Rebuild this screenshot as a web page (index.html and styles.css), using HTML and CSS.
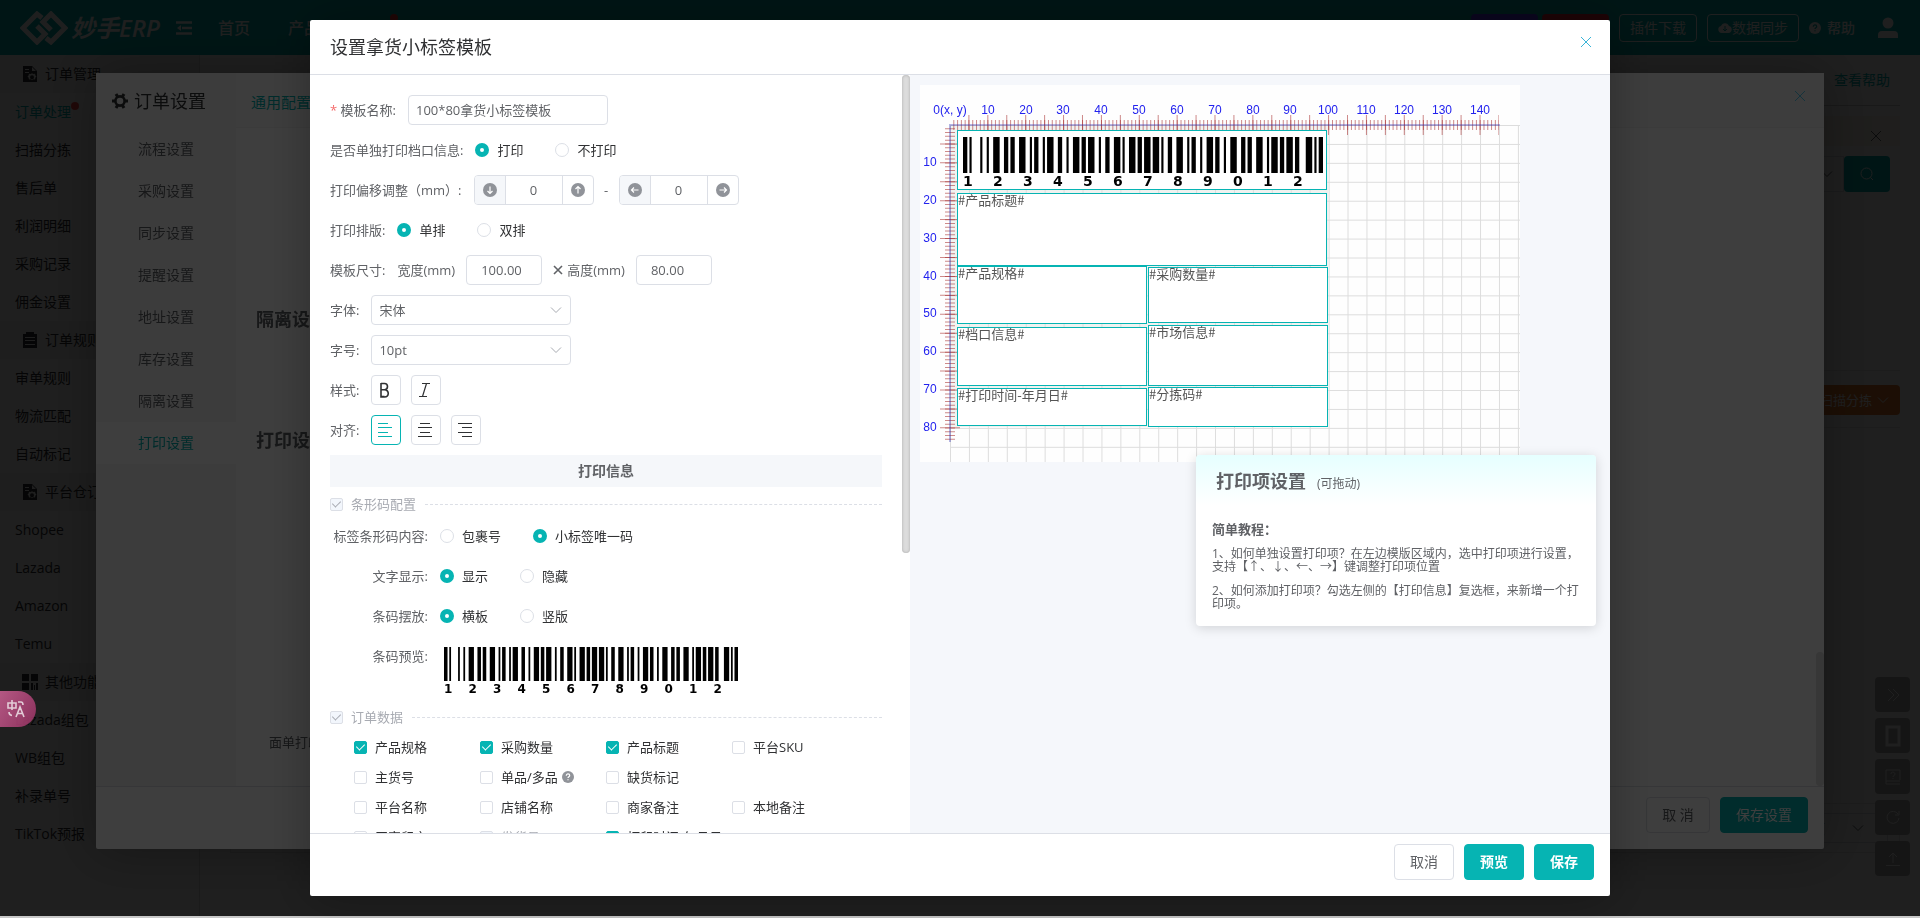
FILE: index.html
```html
<!DOCTYPE html>
<html lang="zh-CN">
<head>
<meta charset="utf-8">
<title>妙手ERP</title>
<link rel="stylesheet" href="styles.css">
</head>
<body>
<svg class="defs" aria-hidden="true">
  <symbol id="i-doc" viewBox="0 0 16 16"><path fill="currentColor" fill-rule="evenodd" d="M1 0h9l5 5v11H1zM3 3v1h4V3zM3 6v1h4V6zM10 1v4h4zM10 7l1 1 2-.3.5 1.800 1 1-1 1-.5 2-2-.3-1 1-1-1-2 .3-.5-2-1-1 1-1 .5-1.800 2 .3zm0 2.200a2 2 0 100 4 2 2 0 000-4z"/></symbol>
  <symbol id="i-clip" viewBox="0 0 16 16"><path fill="currentColor" fill-rule="evenodd" d="M4 0h8v2h3v14H1V2h3zM3 5v1h10V5zM3 8v1h10V8zM3 12v1h10v-1z"/></symbol>
  <symbol id="i-grid" viewBox="0 0 16 16"><path fill="currentColor" d="M0 0h7v7H0zM9 0h7v7H9zM0 9h7v7H0zM9 9h2v7H9zM12 11h1v5h-1zM14 9h2v7h-2z"/></symbol>
  <symbol id="i-gear" viewBox="0 0 16 16"><circle cx="8" cy="8" r="4.600" fill="none" stroke="currentColor" stroke-width="2.600"/><path stroke="currentColor" stroke-width="3" d="M0 8h3M13 8h3M4 1l1.500 2.600M12 1l-1.500 2.600M4 15l1.500-2.600M12 15l-1.500-2.600"/></symbol>
  <symbol id="i-x" viewBox="0 0 12 12"><path fill="none" stroke="currentColor" d="M1 1l10 10M11 1L1 11"/></symbol>
  <symbol id="i-down" viewBox="0 0 12 12"><path fill="none" stroke="currentColor" d="M1 3.500l5 5 5-5"/></symbol>
  <symbol id="i-arrow" viewBox="0 0 14 14"><circle cx="7" cy="7" r="7" fill="#909399"/><path fill="none" stroke="#fff" stroke-width="1.200" d="M7 3.500v7M4.500 8L7 10.500 9.500 8"/></symbol>
  <symbol id="i-help" viewBox="0 0 14 14"><circle cx="7" cy="7" r="7" fill="currentColor"/><path class="help-mark" fill="none" stroke-width="1.400" d="M5 5.600c0-3 4-2.600 4-.3 0 1.500-2 1.500-2 3M7 9.500v1.400"/></symbol>
  <symbol id="bars" viewBox="0 0 167 10" preserveAspectRatio="none"><path stroke="#000" stroke-width="10" d="M0 5H167" stroke-dasharray="2 1 1 4 1 2 1 2 3 2 2 1 2 2 3 2 1 1 2 2 1 1 3 2 2 2 1 2 3 1 2 1 3 2 1 2 2 2 3 1 1 2 3 1 2 1 3 1 3 1 1 2 2 2 3 2 1 1 2 2 1 2 3 1 2 2 1 2 3 2 2 1 2 2 3 2 1 1 3 1 2 1 3 1 2 3 3 1 1 1 2"/></symbol>
</svg>

<div class="app">
  <header class="top">
    <div class="logo">
      <svg width="48" height="34" viewBox="0 0 48 34" fill="none" stroke="#fff" stroke-width="5"><path d="M22 7l-5-4L3 17l14 14 8-8-8-8"/><path d="M26 27l5 4 14-14L31 3l-8 8 8 8"/></svg>
      <span>妙手ERP</span>
    </div>
    <svg class="fold" width="16" height="14" viewBox="0 0 16 14" fill="none" stroke="#fff" stroke-width="2.600"><path d="M0 1.500h16M6 7h10M0 12.500h16"/><path fill="#fff" stroke="none" d="M5 4v6L1 7z"/></svg>
    <nav class="nav"><a href="#">首页</a><a href="#">产品</a><i class="nav-dot"></i></nav>
    <div class="tags"><i class="tag purple"></i><i class="tag red"></i></div>
    <button class="ghost">插件下载</button>
    <button class="ghost"><svg width="14" height="12" viewBox="0 0 14 12"><path fill="#fff" d="M3.500 11a3.500 3.500 0 01-.5-6.900 4.200 4.200 0 018 0A3.500 3.500 0 0110.500 11z"/><path stroke="#00b2b0" d="M7 4v5M5 7l2 2 2-2" fill="none"/></svg>数据同步</button>
    <a class="help" href="#"><svg width="12" height="12"><use href="#i-help"/></svg>帮助</a>
    <svg class="user" width="20" height="22" viewBox="0 0 20 22" fill="#fff"><circle cx="10" cy="6" r="5.500"/><path d="M0 21v-3a4 4 0 014-4h12a4 4 0 014 4v3z"/></svg>
  </header>
  <div class="below">
    <nav class="side">
      <div class="group"><svg width="16" height="16"><use href="#i-doc"/></svg>订单管理</div>
      <a class="on" href="#">订单处理<i></i></a><a href="#">扫描分拣</a><a href="#">售后单</a><a href="#">利润明细</a><a href="#">采购记录</a><a href="#">佣金设置</a>
      <div class="group"><svg width="16" height="16"><use href="#i-clip"/></svg>订单规则</div>
      <a href="#">审单规则</a><a href="#">物流匹配</a><a href="#">自动标记</a>
      <div class="group"><svg width="16" height="16"><use href="#i-doc"/></svg>平台仓订单</div>
      <a href="#">Shopee</a><a href="#">Lazada</a><a href="#">Amazon</a><a href="#">Temu</a>
      <div class="group"><svg width="16" height="16"><use href="#i-grid"/></svg>其他功能</div>
      <a href="#">Lazada组包</a><a href="#">WB组包</a><a href="#">补录单号</a><a href="#">TikTok预报</a>
    </nav>
    <main class="main">
      <div class="page-head"><h1>订单处理</h1><a href="#">查看帮助</a></div>
      <div class="notice"><svg width="12" height="12"><use href="#i-x"/></svg></div>
      <div class="filter"><div class="filter-box"><svg width="12" height="12"><use href="#i-down"/></svg></div><button aria-label="搜索"><svg width="14" height="14" viewBox="0 0 14 14" fill="none" stroke="#fff"><circle cx="6.500" cy="6.500" r="5.500"/><path d="M10.500 10.500L13 13"/></svg></button></div>
      <div class="tools"><button>扫描分拣<svg width="12" height="12"><use href="#i-down"/></svg></button></div>
      <div class="pager"><div class="per">20条/页<svg width="12" height="12"><use href="#i-down"/></svg></div></div>
    </main>
  </div>
  <div class="rail">
    <button aria-label="收起"><svg width="14" height="14" viewBox="0 0 14 14"><path d="M2 1l6 6-6 6M7 1l6 6-6 6"/></svg></button>
    <button aria-label="手机"><svg width="16" height="22" viewBox="0 0 16 22"><rect x="2" y="2" width="12" height="18" stroke-width="3"/></svg></button>
    <button aria-label="教程"><svg width="16" height="16" viewBox="0 0 16 16"><path d="M15 11V1H1v14h14M1 12h14M6 5c0-3 4-2 4 0s-2 1-2 3M8 9v1"/></svg></button>
    <button aria-label="刷新"><svg width="14" height="14" viewBox="0 0 14 14"><path d="M12 3a6 6 0 101 4M13 0v4H9"/></svg></button>
    <button aria-label="顶部"><svg width="14" height="14" viewBox="0 0 14 14"><path d="M7 11V1M3 5l4-4 4 4M0 13.500h14"/></svg></button>
  </div>
</div>

<div class="shade first">
  <section class="dialog">
    <div class="dialog-main">
      <div class="dialog-menu">
        <h2><svg width="16" height="16"><use href="#i-gear"/></svg>订单设置</h2>
        <a href="#">流程设置</a><a href="#">采购设置</a><a href="#">同步设置</a><a href="#">提醒设置</a><a href="#">地址设置</a><a href="#">库存设置</a><a href="#">隔离设置</a><a class="on" href="#">打印设置</a>
      </div>
      <div class="dialog-body">
        <div class="tab"><a href="#">通用配置</a><button aria-label="关闭"><svg width="12" height="12"><use href="#i-x"/></svg></button></div>
        <h3 class="isolate">隔离设置</h3>
        <h3 class="print">打印设置</h3>
        <p>面单打印模板</p>
        <i class="bar"></i>
      </div>
    </div>
    <div class="dialog-foot"><button class="btn">取 消</button><button class="btn primary thin">保存设置</button></div>
  </section>
</div>

<div class="shade second">
  <section class="modal" role="dialog" aria-label="设置拿货小标签模板">
    <header class="modal-head"><h2>设置拿货小标签模板</h2><button aria-label="关闭"><svg width="12" height="12"><use href="#i-x"/></svg></button></header>
    <div class="modal-body">
      <form class="form">
        <div class="row"><label class="lb" for="name"><b>*</b> 模板名称:</label><input class="text name" id="name" value="100*80拿货小标签模板"></div>
        <div class="row"><span class="lb">是否单独打印档口信息:</span><label class="opt"><input type="radio" name="stall" checked>打印</label><label class="opt"><input type="radio" name="stall">不打印</label></div>
        <div class="row"><span class="lb wide">打印偏移调整（mm）:</span>
          <div class="step"><button type="button" class="dim" aria-label="下移"><svg width="14" height="14"><use href="#i-arrow"/></svg></button><input value="0" aria-label="纵向偏移"><button type="button" aria-label="上移"><svg class="r180" width="14" height="14"><use href="#i-arrow"/></svg></button></div>
          <span class="dash">-</span>
          <div class="step"><button type="button" class="dim" aria-label="左移"><svg class="r90" width="14" height="14"><use href="#i-arrow"/></svg></button><input value="0" aria-label="横向偏移"><button type="button" aria-label="右移"><svg class="r270" width="14" height="14"><use href="#i-arrow"/></svg></button></div>
        </div>
        <div class="row"><span class="lb">打印排版:</span><label class="opt"><input type="radio" name="lay" checked>单排</label><label class="opt"><input type="radio" name="lay">双排</label></div>
        <div class="row"><span class="lb">模板尺寸:</span><label class="size" for="w">宽度(mm)</label><input class="text num" id="w" value="100.00"><svg class="times" width="10" height="10" viewBox="0 0 10 10"><path stroke="#606266" stroke-width="1.600" d="M1 1l8 8M9 1L1 9"/></svg><label class="size" for="h">高度(mm)</label><input class="text num" id="h" value="80.00"></div>
        <div class="row"><label class="lb" for="font">字体:</label><span class="pick"><select id="font"><option>宋体</option></select><svg width="12" height="12"><use href="#i-down"/></svg></span></div>
        <div class="row"><label class="lb" for="pt">字号:</label><span class="pick"><select id="pt"><option>10pt</option></select><svg width="12" height="12"><use href="#i-down"/></svg></span></div>
        <div class="row"><span class="lb">样式:</span><div class="tools-row">
          <button type="button" aria-label="加粗"><svg width="16" height="16" viewBox="0 0 16 16"><path stroke-width="1.600" d="M4 1v14h3.500c5 0 5-7.300 0-7.300H4M4 1.500h3.500c4 0 4 6.200 0 6.200M4 14.500h3.500"/></svg></button>
          <button type="button" aria-label="斜体"><svg width="16" height="16" viewBox="0 0 16 16"><path stroke-width="1.200" d="M5 1.500h8M2 14.500h8M9.500 1.500l-4 13"/></svg></button></div></div>
        <div class="row"><span class="lb">对齐:</span><div class="tools-row">
          <button type="button" class="on" aria-label="左对齐"><svg width="16" height="16" viewBox="0 0 16 16"><path d="M1 1.500h10M1 5.500h14M1 10.500h10M1 14.500h14"/></svg></button>
          <button type="button" aria-label="居中"><svg width="16" height="16" viewBox="0 0 16 16"><path d="M3 1.500h10M1 5.500h14M3 10.500h10M1 14.500h14"/></svg></button>
          <button type="button" aria-label="右对齐"><svg width="16" height="16" viewBox="0 0 16 16"><path d="M1 1.500h14M5 5.500h10M1 10.500h14M5 14.500h10"/></svg></button></div></div>
        <h3 class="band">打印信息</h3>
        <div class="divide"><label class="opt off"><input type="checkbox" checked disabled>条形码配置</label></div>
        <div class="row in"><span class="lb">标签条形码内容:</span><label class="opt"><input type="radio" name="code">包裹号</label><label class="opt"><input type="radio" name="code" checked>小标签唯一码</label></div>
        <div class="row in"><span class="lb">文字显示:</span><label class="opt"><input type="radio" name="txt" checked>显示</label><label class="opt"><input type="radio" name="txt">隐藏</label></div>
        <div class="row in"><span class="lb">条码摆放:</span><label class="opt"><input type="radio" name="dir" checked>横板</label><label class="opt"><input type="radio" name="dir">竖版</label></div>
        <div class="row in preview"><span class="lb">条码预览:</span>
          <div class="code"><svg><use href="#bars"/></svg><div class="digits"><span>1</span><span>2</span><span>3</span><span>4</span><span>5</span><span>6</span><span>7</span><span>8</span><span>9</span><span>0</span><span>1</span><span>2</span></div></div></div>
        <div class="divide"><label class="opt off"><input type="checkbox" checked disabled>订单数据</label></div>
        <div class="checks">
          <label class="opt"><input type="checkbox" checked>产品规格</label><label class="opt"><input type="checkbox" checked>采购数量</label><label class="opt"><input type="checkbox" checked>产品标题</label><label class="opt"><input type="checkbox">平台SKU</label>
          <label class="opt"><input type="checkbox">主货号</label><label class="opt"><input type="checkbox">单品/多品<svg class="tip" width="12" height="12"><use href="#i-help"/></svg></label><label class="opt"><input type="checkbox">缺货标记</label><span></span>
          <label class="opt"><input type="checkbox">平台名称</label><label class="opt"><input type="checkbox">店铺名称</label><label class="opt"><input type="checkbox">商家备注</label><label class="opt"><input type="checkbox">本地备注</label>
          <label class="opt"><input type="checkbox">买家留言</label><label class="opt off"><input type="checkbox" disabled>发货员</label><label class="opt"><input type="checkbox" checked>打印时间-年月日</label>
        </div>
      </form>
      <div class="track"><i></i></div>
      <div class="stage">
        <div class="canvas">
          <svg class="ruler" width="600" height="377" viewBox="0 0 600 377">
            <defs>
              <pattern id="g" x="30" y="40" width="18.930" height="18.930" patternUnits="userSpaceOnUse"><path d="M0 .5H19M.5 0V19" stroke="#ddd" fill="none"/></pattern>
            </defs>
            <rect x="30" y="40" width="378" height="302" fill="#f0f2f0"/>
            <rect x="30" y="40" width="570" height="337" fill="url(#g)"/>
            <g stroke="#a52a2a" stroke-opacity=".55" fill="none">
              <path d="M33.300 40H579" stroke-width="10" stroke-dasharray="1 2.787"/>
              <path d="M48.400 40H579" stroke-width="20" stroke-dasharray="1 17.930"/>
              <path d="M30 43.300V355" stroke-width="10" stroke-dasharray="1 2.787"/>
              <path d="M30 58.400V352" stroke-width="20" stroke-dasharray="1 17.930"/>
            </g>
            <path d="M29 40H580M30 40V357" stroke="#2a2ab0" stroke-opacity=".35" stroke-width="2"/>
            <g class="nums">
              <text x="30" y="29">0(x, y)</text><text x="68" y="29">10</text><text x="106" y="29">20</text><text x="143" y="29">30</text><text x="181" y="29">40</text><text x="219" y="29">50</text><text x="257" y="29">60</text><text x="295" y="29">70</text><text x="333" y="29">80</text><text x="370" y="29">90</text><text x="408" y="29">100</text><text x="446" y="29">110</text><text x="484" y="29">120</text><text x="522" y="29">130</text><text x="560" y="29">140</text>
              <text x="10" y="81">10</text><text x="10" y="119">20</text><text x="10" y="157">30</text><text x="10" y="195">40</text><text x="10" y="232">50</text><text x="10" y="270">60</text><text x="10" y="308">70</text><text x="10" y="346">80</text>
            </g>
          </svg>
          <div class="item barcode"><div class="code"><svg><use href="#bars"/></svg><div class="digits"><span>1</span><span>2</span><span>3</span><span>4</span><span>5</span><span>6</span><span>7</span><span>8</span><span>9</span><span>0</span><span>1</span><span>2</span></div></div></div>
          <div class="item title">#产品标题#</div>
          <div class="item spec">#产品规格#</div>
          <div class="item qty">#采购数量#</div>
          <div class="item stall">#档口信息#</div>
          <div class="item market">#市场信息#</div>
          <div class="item date">#打印时间-年月日#</div>
          <div class="item sort">#分拣码#</div>
        </div>
        <aside class="float">
          <h3>打印项设置<small>(可拖动)</small></h3>
          <div class="float-body">
            <h4>简单教程：</h4>
            <p>1、如何单独设置打印项？在左边模版区域内，选中打印项进行设置，支持【↑、↓、←、→】键调整打印项位置</p>
            <p>2、如何添加打印项？勾选左侧的【打印信息】复选框，来新增一个打印项。</p>
          </div>
        </aside>
      </div>
    </div>
    <footer class="modal-foot"><button class="btn">取消</button><button class="btn primary">预览</button><button class="btn primary">保存</button></footer>
  </section>
</div>

<button class="translate" aria-label="翻译"><svg width="18" height="18" viewBox="0 0 18 18" fill="none" stroke="#e3cdd8" stroke-width="1.600"><path d="M1 3h8v5H1zM5 0v10M11 2h3q2 0 2 3M2 12q0 3 3 3.500M9 17l4-10 4 10M10.500 13.500h5"/></svg></button>
</body>
</html>
```

FILE: styles.css
```css
* { box-sizing: border-box; }
body {
  margin: 0;
  height: 100vh;
  overflow: hidden;
  background: #c8c8c8;
  font: 13px/20px "Open Sans", "Noto Sans CJK SC", sans-serif;
  color: #606266;
}
button, input, select { font: inherit; color: inherit; }
button { padding: 0; border: 0; background: none; display: flex; align-items: center; justify-content: center; }
a { color: inherit; text-decoration: none; }
h1, h2, h3, h4, p { margin: 0; font-weight: 400; }
svg { flex: none; }
.defs { position: absolute; width: 0; height: 0; }

/* application page */
.app { height: calc(100vh - 2px); background: #fff; display: flex; flex-direction: column; overflow: hidden; }
.top { flex: none; height: 55px; background: #00b2b0; color: #fff; display: flex; align-items: center; padding: 0 22px 0 20px; font-size: 14px; }
.logo { display: flex; align-items: center; gap: 3px; font-size: 24px; font-style: italic; font-weight: 600; }
.fold { margin-left: 16px; }
.nav { display: flex; margin-left: 26px; gap: 38px; font-size: 16px; font-weight: 500; flex: 1; }
.nav-dot { width: 8px; height: 8px; border-radius: 4px; background: #f33; margin: -4px 0 0 32px; }
.tags { display: flex; gap: 4px; margin-right: 10px; }
.tag { width: 67px; height: 28px; border-radius: 4px; background: #53f; }
.tag.red { background: #e23; }
.ghost { height: 28px; padding: 0 10px; border: 1px solid #fff; border-radius: 4px; margin-right: 10px; }
.help-mark { stroke: var(--mark, #fff); }
.help { --mark: #00b2b0; display: flex; align-items: center; gap: 6px; font-weight: 500; margin-right: 23px; }
.below { flex: 1; display: flex; min-height: 0; }
.side { flex: none; width: 200px; border-right: 1px solid #ddd; font-size: 14px; color: #303133; }
.side a, .group { display: flex; align-items: center; height: 38px; padding-left: 15px; }
.side a.on { color: #00b2b0; }
.side a i { width: 8px; height: 8px; border-radius: 4px; background: #f44; margin-top: -12px; }
.side .group { padding-left: 22px; gap: 7px; background: #f4f4f4; }
.main { flex: 1; display: flex; flex-direction: column; padding: 0 20px 63px 30px; }
.page-head { display: flex; justify-content: space-between; align-items: center; height: 51px; padding-right: 10px; border-bottom: 1px solid #ccc; }
.page-head h1 { font-size: 20px; line-height: 28px; margin-top: 8px; color: #303133; }
.page-head a { font-size: 14px; color: #00b2b0; }
.notice { height: 30px; margin-top: 10px; background: #fdf6ec; display: flex; justify-content: flex-end; align-items: flex-end; padding: 4px 18px; }
.filter { display: flex; height: 36px; margin: 10px 10px 0 0; }
.filter-box { flex: 1; border: 1px solid #dcdfe6; display: flex; align-items: center; justify-content: flex-end; padding-right: 10px; }
.filter button { width: 46px; border-radius: 4px; background: #00b2b0; }
.tools { margin-top: 178px; padding: 14px 0 12px; border: solid #e8e8e8; border-width: 1px 0; display: flex; justify-content: flex-end; }
.tools button { height: 30px; padding: 0 11px; gap: 5px; border-radius: 4px; background: #e6792b; color: #fff; }
.pager { margin-top: auto; height: 50px; border: 1px solid #e8e8e8; display: flex; justify-content: flex-end; align-items: center; padding-right: 11px; }
.per { display: flex; align-items: center; justify-content: flex-end; gap: 27px; width: 120px; height: 30px; padding-right: 23px; border: 1px solid #dcdfe6; }
.rail { position: absolute; right: 10px; bottom: 42px; display: grid; gap: 6px; }
.rail button { width: 35px; height: 35px; border-radius: 4px; background: #b0b0b0; }
.rail svg { fill: none; stroke: #fff; stroke-width: 1; }

/* overlays */
.shade { position: fixed; inset: 0 0 2px; display: flex; justify-content: center; align-items: flex-start; }
.first { background: rgba(0, 0, 0, .5); padding-top: 73px; }
.second { background: rgba(0, 0, 0, .755); padding-top: 20px; }
.btn { height: 36px; min-width: 60px; padding: 0 15px; border: 1px solid #dcdfe6; border-radius: 4px; background: #fff; font-size: 14px; }
.btn.primary { border-color: #06b4b3; background: #06b4b3; color: #fff; font-weight: 700; }
.btn.thin { font-weight: 400; }

/* order settings dialog */
.dialog { width: 90%; height: calc(100vh - 142px); background: #fff; border-radius: 2px; box-shadow: 1px 1px 50px rgba(0, 0, 0, .3); display: flex; flex-direction: column; }
.dialog-main { flex: 1; display: flex; min-height: 0; border-bottom: 1px solid #dcdfe6; }
.dialog-menu { width: 140px; background: #f6f6f6; font-size: 14px; }
.dialog-menu h2 { display: flex; align-items: center; gap: 6px; height: 55px; padding-left: 16px; font-size: 18px; color: #303133; }
.dialog-menu a { display: block; line-height: 42px; text-align: center; }
.dialog-menu a.on { background: #fff; color: #00b2b0; }
.dialog-body { flex: 1; position: relative; }
.tab { display: flex; justify-content: space-between; align-items: center; height: 55px; padding: 4px 18px 0 15px; background: #fafafa; border-bottom: 1px solid #f0f0f0; font-size: 15px; color: #00b2b0; }
.tab button { color: #5cd0f4; margin-top: -12px; }
.dialog-body h3 { font-size: 18px; line-height: 24px; font-weight: 700; padding-left: 20px; }
.isolate { margin-top: 179px; }
.print { margin-top: 97px; }
.dialog-body p { padding-left: 33px; margin-top: 280px; }
.bar { position: absolute; right: 0; bottom: 0; width: 8px; height: 134px; border-radius: 4px; background: #e0e0e0; }
.dialog-foot { display: flex; justify-content: flex-end; gap: 10px; padding: 10px 16px 16px; }
.dialog-foot .btn { min-width: 64px; }

/* label template modal */
.modal { width: min(1300px, 96vw); height: calc(100vh - 42px); background: #fff; border-radius: 2px; box-shadow: 1px 1px 50px rgba(0, 0, 0, .3); display: flex; flex-direction: column; }
.modal-head { flex: none; height: 55px; padding: 0 18px 0 20px; display: flex; align-items: center; justify-content: space-between; border-bottom: 1px solid #dcdfe6; }
.modal-head h2 { font-size: 18px; color: #303133; }
.modal-head button { color: #3ab4d8; margin-top: -10px; }
.modal-body { flex: 1; min-height: 0; display: flex; }
.modal-foot { flex: none; display: flex; justify-content: flex-end; gap: 10px; padding: 10px 16px 16px; border-top: 1px solid #dcdfe6; }
.form { flex: none; width: 592px; padding: 15px 20px 0; overflow: hidden; }
.track { flex: none; width: 8px; }
.track i { display: block; height: 478px; border-radius: 4px; background: #dcdcdc; box-shadow: inset 0 0 3px #aaa; }
.stage { flex: 1; position: relative; background: #f5f7fb; padding: 10px; }
.row { display: flex; align-items: center; height: 40px; }
.lb { padding-right: 12px; }
.lb b { color: #f56c6c; font-weight: 400; }
.text { height: 30px; padding: 0 7px 2px; border: 1px solid #dcdfe6; border-radius: 4px; background: #fff; }
.name { width: 200px; }
.num { width: 76px; padding: 0 14px; }
.size { padding-right: 11px; }
.times { margin: 0 4px 0 11px; }
.opt { display: flex; align-items: center; gap: 8px; margin-right: 32px; color: #303133; }
.opt input { appearance: none; flex: none; margin: 0; width: 14px; height: 14px; border: 1px solid #dcdfe6; border-radius: 7px; background: #fff; }
.opt input[type=radio]:checked { border: 5px solid #06b4b3; }
.opt input[type=checkbox] { width: 13px; height: 13px; border-radius: 2px; display: grid; place-items: center; }
.opt input[type=checkbox]:checked { background: #06b4b3; border-color: #06b4b3; }
.opt input[type=checkbox]:checked::after { content: ""; width: 4px; height: 7px; margin-top: -2px; border: solid #fff; border-width: 0 1px 1px 0; transform: rotate(45deg); }
.opt.off { color: #a8abb2; }
.opt.off input[type=checkbox] { background: #f2f6fc; border-color: #dcdfe6; }
.opt.off input[type=checkbox]:checked::after { border-color: #a8abb2; }
.tip { color: #909399; margin-left: -4px; }
.step { display: flex; width: 120px; height: 30px; border: 1px solid #dcdfe6; border-radius: 4px; overflow: hidden; }
.step button { width: 30px; }
.step .dim { background: #f5f7fa; }
.step input { flex: 1; min-width: 0; border: solid #dcdfe6; border-width: 0 1px; text-align: center; padding: 0; }
.r90 { transform: rotate(90deg); }
.r180 { transform: rotate(180deg); }
.r270 { transform: rotate(270deg); }
.dash { width: 25px; text-align: center; }
.pick { display: grid; align-items: center; width: 200px; }
.pick select, .pick svg { grid-area: 1 / 1; }
.pick select { appearance: none; height: 30px; padding: 0 7px; border: 1px solid #dcdfe6; border-radius: 4px; background: #fff; }
.pick svg { justify-self: end; margin-right: 9px; color: #a8abb2; pointer-events: none; }
.tools-row { display: flex; gap: 10px; }
.tools-row button { width: 30px; height: 30px; padding-right: 3px; border: 1px solid #dcdfe6; border-radius: 4px; color: #303133; }
.tools-row .on { border-color: #06b4b3; color: #06b4b3; }
.tools-row svg { fill: none; stroke: currentColor; }
.band { margin: 5px 0; line-height: 32px; background: #f5f7fa; text-align: center; font-size: 14px; font-weight: 700; }
.divide { display: flex; align-items: center; height: 24px; }
.divide .opt { margin-right: 9px; }
.divide::after { content: ""; flex: 1; border-top: 1px dashed #dcdfe6; }
.in .lb { width: 110px; text-align: right; white-space: nowrap; }
.code svg { display: block; width: 100%; height: 34px; }
.digits { display: grid; grid-template-columns: repeat(12, 1fr); font: 700 12px/16px "DejaVu Sans", sans-serif; color: #000; }
.preview { height: 69px; align-items: flex-start; }
.preview .lb { line-height: 40px; }
.preview .code { width: 294px; margin: 11px 0 0 4px; }
.checks { display: grid; grid-template-columns: repeat(4, 126px); grid-auto-rows: 30px; align-items: center; padding: 3px 0 0 24px; }
.checks .opt { margin: 0; white-space: nowrap; }

/* label canvas */
.canvas { position: relative; width: 600px; height: 377px; background: #fefefe; }
.ruler { display: block; }
.nums { font: 12px "Liberation Sans", sans-serif; fill: #22e; text-anchor: middle; }
.item { position: absolute; border: 1px solid #06b4b3; background: #fff; font: 13px/12px "Noto Sans CJK SC", sans-serif; color: #555; }
.barcode { left: 37px; top: 45px; width: 370px; height: 60px; padding: 6px 3px 0 5px; }
.barcode .code svg { height: 36px; }
.barcode .digits { font-size: 14px; }
.title { left: 37px; top: 108px; width: 370px; height: 73px; }
.spec { left: 37px; top: 181px; width: 190px; height: 58px; }
.qty { left: 228px; top: 182px; width: 180px; height: 56px; }
.stall { left: 37px; top: 242px; width: 190px; height: 59px; }
.market { left: 228px; top: 240px; width: 180px; height: 61px; }
.date { left: 37px; top: 303px; width: 190px; height: 38px; }
.sort { left: 228px; top: 302px; width: 180px; height: 40px; }
.float { position: absolute; left: 286px; top: 380px; width: 400px; border-radius: 4px; background: #fff; box-shadow: 0 2px 12px rgba(0, 0, 0, .15); }
.float h3 { display: flex; align-items: baseline; gap: 11px; height: 50px; padding-left: 20px; font-size: 18px; line-height: 52px; font-weight: 700; background: linear-gradient(#e6ffff, #fff); border-radius: 4px; }
.float small { font-size: 12px; font-weight: 400; }
.float-body { padding: 14px 16px 16px; font-size: 12px; line-height: 13px; }
.float h4 { font-size: 13px; line-height: 20px; font-weight: 700; margin-bottom: 8px; }
.float p { margin-bottom: 11px; }
.float p:last-child { margin: 0; }

.translate { position: fixed; left: 0; top: 691px; width: 36px; height: 36px; padding-right: 4px; border-radius: 0 18px 18px 0; background: linear-gradient(120deg, rgba(196, 94, 142, .9), rgba(150, 50, 98, .9)); }
```
